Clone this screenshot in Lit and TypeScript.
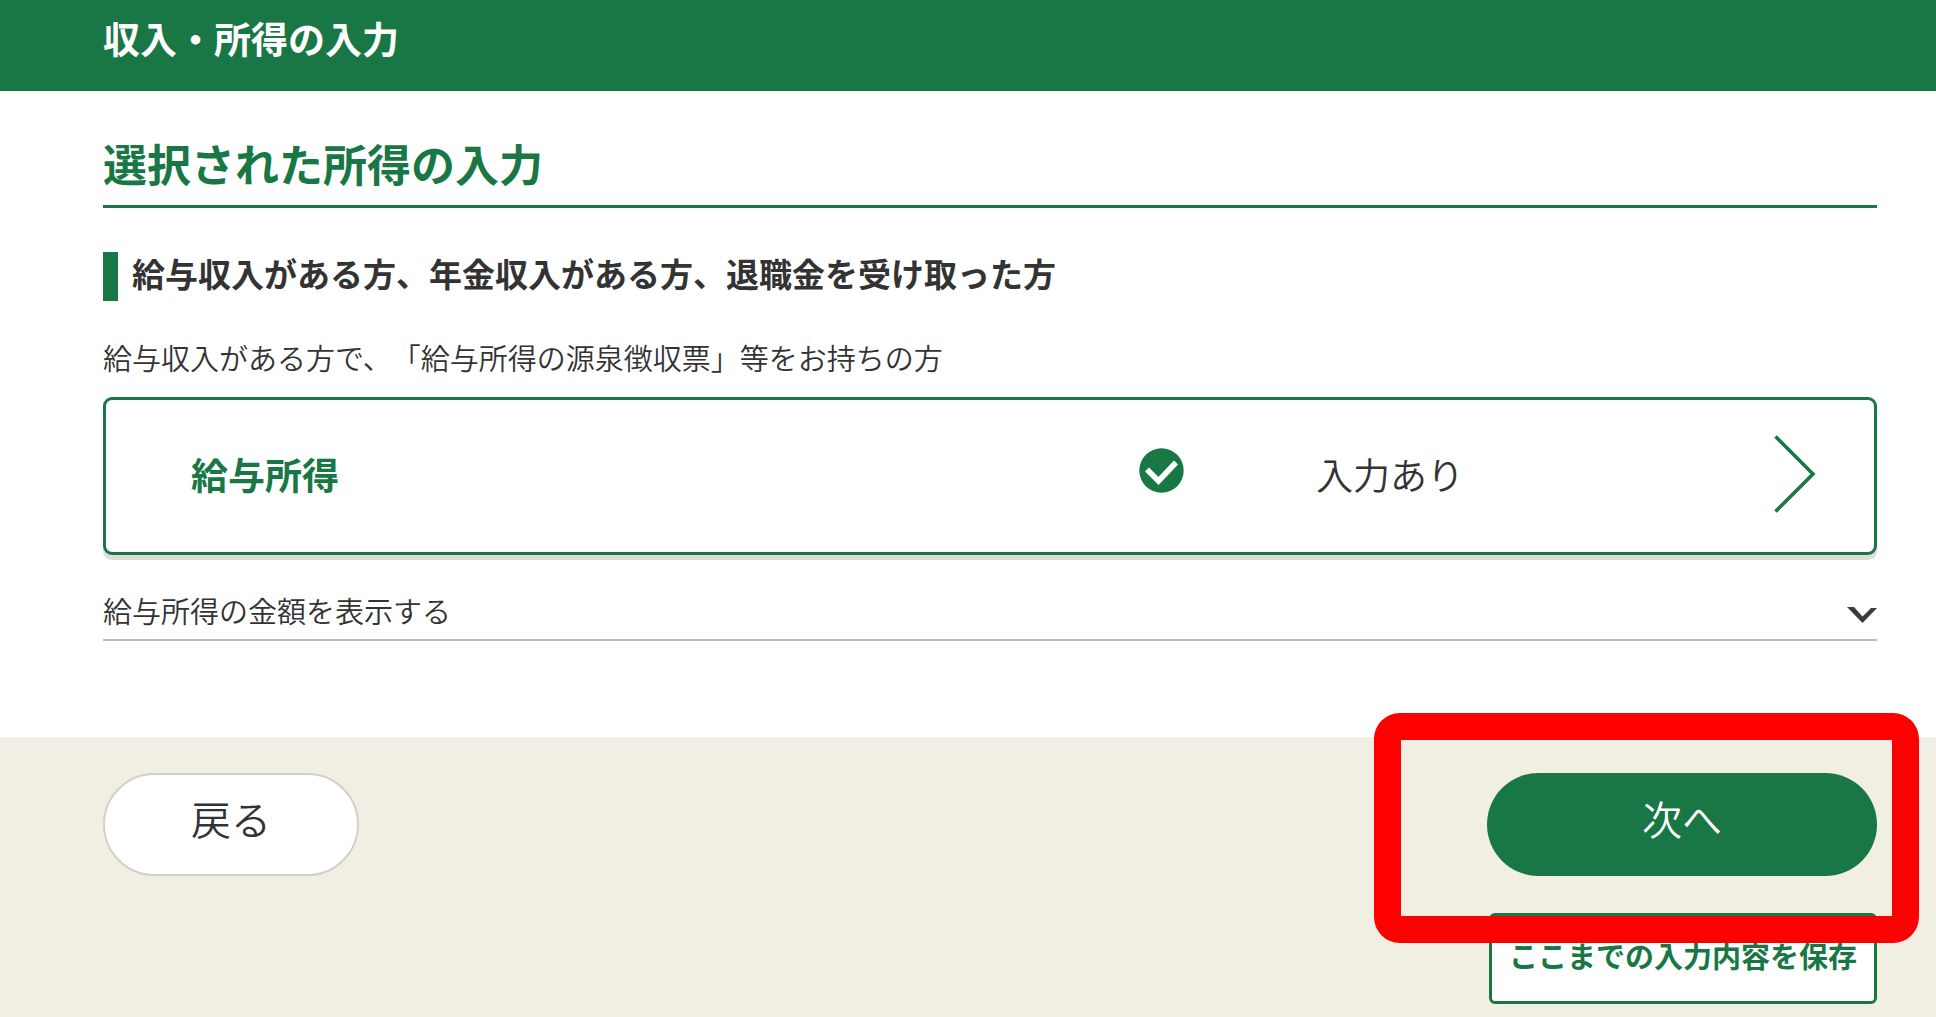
import { LitElement, html, css } from "lit";
import { customElement } from "lit/decorators.js";

@customElement("app-root")
export class AppRoot extends LitElement {
  static styles = css`
    :host {
      --green: #187745;
      --ink: #333;
      display: flex;
      flex-direction: column;
      min-height: 100vh;
      overflow: hidden;
      background: #fff;
      color: var(--ink);
      font-family: "Noto Sans CJK JP", sans-serif;
      font-size: 29px;
      font-weight: 350;
      line-height: 44px;
      text-spacing-trim: space-all;
    }
    * {
      box-sizing: border-box;
    }
    h1,
    h2,
    h3,
    p {
      margin: 0;
    }
    button {
      font: inherit;
      cursor: pointer;
    }
    .header,
    .main,
    .footer {
      padding-left: 103px;
      padding-right: 59px;
    }
    .header {
      padding-top: 14px;
      padding-bottom: 28px;
      background: var(--green);
      border-bottom: 1px solid #12693a;
      color: #fff;
    }
    .title {
      font-size: 37px;
      line-height: 48px;
      font-weight: 700;
    }
    .main {
      padding-top: 42px;
      padding-bottom: 96px;
    }
    .section {
      padding-bottom: 12px;
      border-bottom: 3px solid var(--green);
      color: var(--green);
      font-size: 44px;
      line-height: 60px;
      font-weight: 700;
    }
    .group {
      margin-top: 44px;
      padding-bottom: 7px;
      border-left: 15px solid var(--green);
      padding-left: 14px;
      font-size: 33px;
      line-height: 42px;
      font-weight: 700;
    }
    .lead {
      margin-top: 34px;
    }
    .card {
      display: grid;
      grid-template-columns: 948fr 177fr 458fr auto;
      align-items: center;
      width: 100%;
      height: 158px;
      margin-top: 18px;
      padding: 0 58px 4px 85px;
      border: 3px solid var(--green);
      border-radius: 9px;
      background: #fff;
      box-shadow: 0 5px 0 #dcdcdc;
      color: var(--ink);
      font-size: 37px;
      line-height: 48px;
      text-align: left;
    }
    .name {
      color: var(--green);
      font-weight: 700;
    }
    .check,
    .next-mark,
    .down {
      display: block;
    }
    .toggle {
      display: flex;
      align-items: center;
      justify-content: space-between;
      width: 100%;
      margin-top: 33px;
      padding: 0 0 7px;
      border: 0;
      border-bottom: 2px solid #bdbdb2;
      background: none;
      color: var(--ink);
      text-align: left;
    }
    .footer {
      flex: 1;
      display: flex;
      align-items: flex-start;
      justify-content: space-between;
      padding-top: 36px;
      padding-bottom: 14px;
      background: #f1efe3;
    }
    .pill {
      display: block;
      height: 103px;
      padding: 0 0 14px;
      border-radius: 52px;
      font-size: 40px;
      line-height: 48px;
    }
    .back {
      width: 256px;
      border: 2px solid #d6cec8;
      background: #fff;
      color: var(--ink);
    }
    .actions {
      display: flex;
      flex-direction: column;
      align-items: flex-end;
      gap: 37px;
      width: 390px;
    }
    .marked {
      position: relative;
      width: 100%;
    }
    .next {
      width: 100%;
      border: 0;
      background: var(--green);
      color: #fff;
    }
    .marker {
      position: absolute;
      inset: -60px -42px -67px -113px;
      border: 27px solid #f00;
      border-radius: 26px;
      pointer-events: none;
      z-index: 1;
    }
    .save {
      width: 388px;
      height: 91px;
      padding: 0 0 8px;
      border: 3px solid var(--green);
      border-radius: 6px;
      background: #fff;
      color: var(--green);
      font-weight: 700;
      white-space: nowrap;
    }
  `;

  render() {
    return html`
      <header class="header"><h1 class="title">収入・所得の入力</h1></header>
      <main class="main">
        <h2 class="section">選択された所得の入力</h2>
        <h3 class="group">給与収入がある方、年金収入がある方、退職金を受け取った方</h3>
        <p class="lead">給与収入がある方で、「給与所得の源泉徴収票」等をお持ちの方</p>
        <button class="card" type="button">
          <span class="name">給与所得</span>
          <svg class="check" width="45" height="52" viewBox="0 0 45 52" aria-hidden="true">
            <circle cx="22.5" cy="22.5" r="22.2" fill="#187745" />
            <path d="M8 21.5 L19.5 33 L37 14.5" fill="none" stroke="#fff" stroke-width="5.6" />
          </svg>
          <span>入力あり</span>
          <svg class="next-mark" width="42" height="78" viewBox="0 0 42 78" aria-hidden="true">
            <path d="M1.5 1.5 L39 39 L1.5 76.5" fill="none" stroke="#187745" stroke-width="3.6" />
          </svg>
        </button>
        <button class="toggle" type="button" aria-expanded="false">
          <span>給与所得の金額を表示する</span>
          <svg class="down" width="30" height="26" viewBox="0 -10 30 26" aria-hidden="true">
            <path d="M0 0 H7 L15.5 9.5 L24 1 H30 L15.5 16 Z" fill="#3c3c3c" />
          </svg>
        </button>
      </main>
      <footer class="footer">
        <button class="pill back" type="button">戻る</button>
        <div class="actions">
          <div class="marked">
            <button class="pill next" type="button">次へ</button>
            <div class="marker"></div>
          </div>
          <button class="save" type="button">ここまでの入力内容を保存</button>
        </div>
      </footer>
    `;
  }
}
